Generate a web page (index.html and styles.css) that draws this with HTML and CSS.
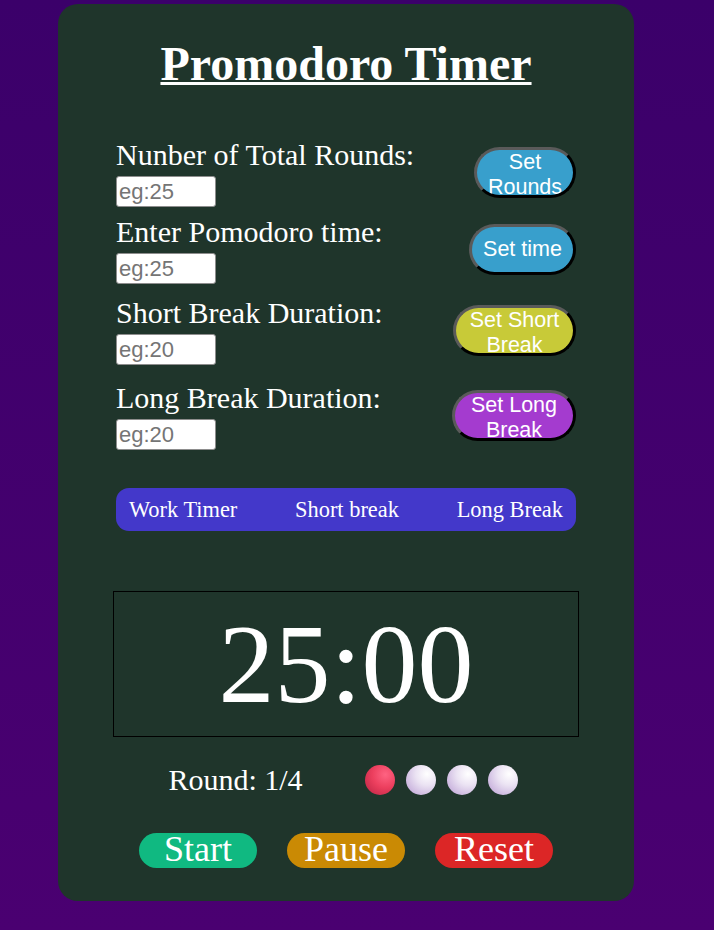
FILE: index.html
```html
<!DOCTYPE html>
<html lang="en">
<head>
<meta charset="utf-8">
<title>Promodoro Timer</title>
<link rel="stylesheet" href="styles.css">
</head>
<body>
<main class="card">
  <h1 class="title">Promodoro Timer</h1>

  <section class="settings">
    <div class="row">
      <div class="field">
        <label class="label" for="rounds">Nunber of Total Rounds:</label>
        <input class="num-input" id="rounds" type="text" placeholder="eg:25">
      </div>
      <button class="set-btn btn-blue w-rounds">Set Rounds</button>
    </div>
    <div class="row row-2">
      <div class="field">
        <label class="label" for="pomo">Enter Pomodoro time:</label>
        <input class="num-input" id="pomo" type="text" placeholder="eg:25">
      </div>
      <button class="set-btn btn-blue w-time">Set time</button>
    </div>
    <div class="row row-3">
      <div class="field">
        <label class="label" for="short">Short Break Duration:</label>
        <input class="num-input" id="short" type="text" placeholder="eg:20">
      </div>
      <button class="set-btn btn-yellow w-short">Set Short Break</button>
    </div>
    <div class="row row-4">
      <div class="field">
        <label class="label" for="long">Long Break Duration:</label>
        <input class="num-input" id="long" type="text" placeholder="eg:20">
      </div>
      <button class="set-btn btn-purple w-long">Set Long Break</button>
    </div>
  </section>

  <nav class="modes">
    <span class="mode">Work Timer</span>
    <span class="mode">Short break</span>
    <span class="mode">Long Break</span>
  </nav>

  <div class="timer">25:00</div>

  <div class="round-row">
    <span class="round-text">Round: 1/4</span>
    <div class="dots">
      <span class="dot dot-active"></span>
      <span class="dot dot-idle"></span>
      <span class="dot dot-idle"></span>
      <span class="dot dot-idle"></span>
    </div>
  </div>

  <div class="controls">
    <button class="ctrl ctrl-start">Start</button>
    <button class="ctrl ctrl-pause">Pause</button>
    <button class="ctrl ctrl-reset">Reset</button>
  </div>
</main>
</body>
</html>
```

FILE: styles.css
```css
html {
  background: #410070;
}

body {
  margin: 0;
  padding-top: 4px;
  min-height: 926px;
  background: linear-gradient(to bottom, #3b006a, #4a0071);
  font-family: "Liberation Serif", "Times New Roman", serif;
}

.card {
  width: 576px;
  box-sizing: border-box;
  margin-left: 58px;
  padding: 33px 58px 33px;
  background: #1f352b;
  border-radius: 20px;
  color: #ffffff;
}

.title {
  margin: 0;
  font-size: 48px;
  font-weight: bold;
  line-height: 53px;
  text-align: center;
  text-decoration: underline;
  text-decoration-thickness: 3px;
}

.settings {
  margin-top: 48px;
  display: flex;
  flex-direction: column;
}

.row {
  display: flex;
  justify-content: space-between;
  align-items: center;
}

.row-2 { margin-top: 8px; }
.row-3 { margin-top: 12px; }
.row-4 { margin-top: 16px; }

.field {
  display: flex;
  flex-direction: column;
  align-items: flex-start;
  gap: 5px;
}

.label {
  font-size: 30px;
  line-height: 33px;
}

.num-input {
  width: 100px;
  height: 31px;
  box-sizing: border-box;
  margin: 0;
  padding: 0 2px;
  border: 1px solid #8d8d8d;
  border-radius: 3px;
  background: #ffffff;
  font-family: "Liberation Sans", Arial, sans-serif;
  font-size: 22px;
  color: #222;
}

.num-input::placeholder {
  color: #757575;
}

.set-btn {
  height: 51px;
  box-sizing: border-box;
  padding: 0 10px;
  border: 3px solid;
  border-color: #5a5a5a #000000 #000000 #5a5a5a;
  border-radius: 26px;
  font-family: "Liberation Sans", Arial, sans-serif;
  font-size: 21.5px;
  line-height: 24.7px;
  color: #ffffff;
  overflow: hidden;
  flex-shrink: 0;
}

.btn-blue { background: #389fcc; }
.btn-yellow { background: #c8ca38; }
.btn-purple { background: #a43bcf; }

.w-rounds { width: 102px; }
.w-time { width: 107px; }
.w-short { width: 123px; }
.w-long { width: 124px; }

.modes {
  margin-top: 38px;
  height: 43px;
  box-sizing: border-box;
  padding: 0 13px;
  display: flex;
  justify-content: space-between;
  align-items: center;
  background: #4338ca;
  border-radius: 13px;
  font-size: 22.4px;
  line-height: 25px;
}

.timer {
  margin: 60px -3px 0;
  padding: 10px 0;
  border: 1px solid #000000;
  font-size: 112px;
  line-height: 124px;
  text-align: center;
}

.round-row {
  margin-top: 26px;
  padding-right: 6px;
  display: flex;
  justify-content: center;
  align-items: center;
  gap: 62px;
}

.round-text {
  font-size: 30px;
  line-height: 33px;
}

.dots {
  display: flex;
  gap: 11px;
}

.dot {
  width: 30px;
  height: 30px;
  border-radius: 50%;
}

.dot-active {
  background: radial-gradient(circle at 68% 32%, #ff6382 0%, #ec3f5e 45%, #b92242 100%);
}

.dot-idle {
  background: radial-gradient(circle at 70% 30%, #ffffff 0%, #ebe3f3 38%, #b99cd3 100%);
}

.controls {
  margin-top: 37px;
  display: flex;
  justify-content: center;
  gap: 30px;
}

.ctrl {
  width: 118px;
  height: 35px;
  box-sizing: border-box;
  padding: 0 0 3px;
  border: none;
  border-radius: 18px;
  font-family: "Liberation Serif", "Times New Roman", serif;
  font-size: 36px;
  line-height: 32px;
  color: #ffffff;
}

.ctrl-start { background: #10b981; }
.ctrl-pause { background: #ca8a04; }
.ctrl-reset { background: #dc2626; }
```
